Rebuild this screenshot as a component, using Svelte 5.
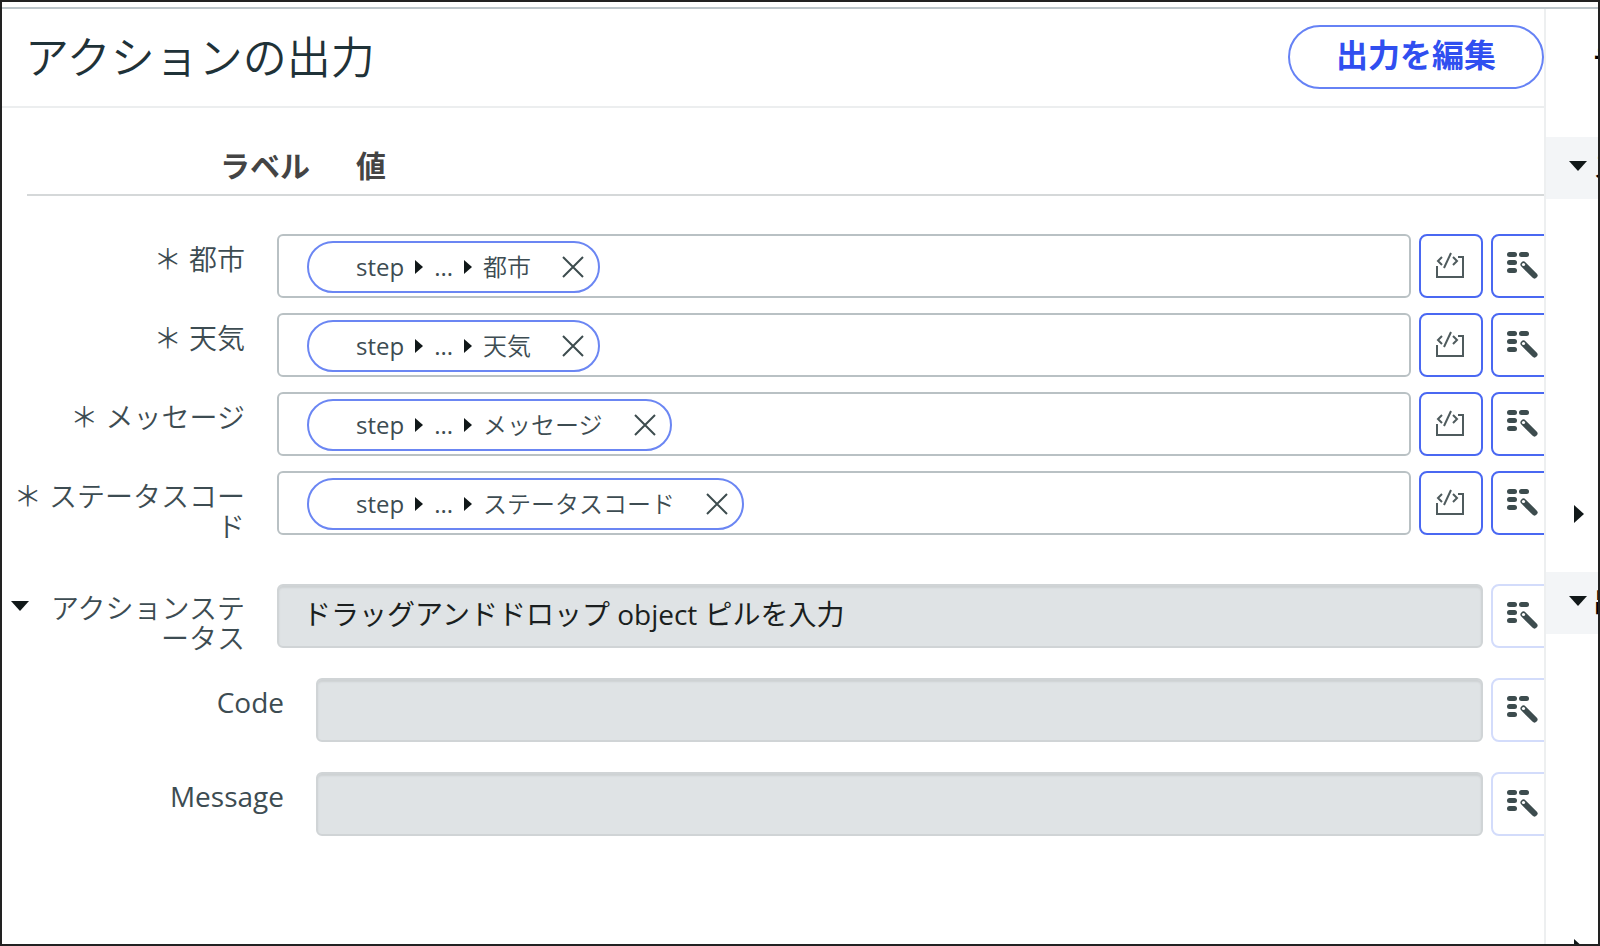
<script lang="ts">
  type Output = {
    id: string;
    label: string;
  };

  type StatusField = {
    id: string;
    label: string;
    placeholder: string;
    nested: boolean;
  };

  let outputs = $state<Output[]>([
    { id: 'city', label: '都市' },
    { id: 'weather', label: '天気' },
    { id: 'message', label: 'メッセージ' },
    { id: 'status-code', label: 'ステータスコード' }
  ]);

  // Outputs whose data pill was removed
  let cleared = $state<string[]>([]);

  let statusOpen = $state(true);

  const statusFields: StatusField[] = [
    {
      id: 'action-status',
      label: 'アクションステータス',
      placeholder: 'ドラッグアンドドロップ object ピルを入力',
      nested: false
    },
    { id: 'code', label: 'Code', placeholder: '', nested: true },
    { id: 'msg', label: 'Message', placeholder: '', nested: true }
  ];

  let visibleFields = $derived(statusFields.filter((f) => statusOpen || !f.nested));

  function removePill(id: string) {
    cleared = [...cleared, id];
  }
</script>

{#snippet caret(dir: string)}
  {#if dir === 'down'}
    <svg class="caret" width="18" height="10" viewBox="0 0 18 10" aria-hidden="true">
      <path d="M0 0h18L9 10z" />
    </svg>
  {:else}
    <svg class="caret" width="10" height="18" viewBox="0 0 10 18" aria-hidden="true">
      <path d="M0 0v18l10-9z" />
    </svg>
  {/if}
{/snippet}

{#snippet arrow()}
  <svg class="arrow" width="8" height="14" viewBox="0 0 8 14" aria-hidden="true">
    <path d="M0 0v14l8-7z" />
  </svg>
{/snippet}

{#snippet wandIcon()}
  <svg width="34" height="30" viewBox="0 0 34 30" aria-hidden="true">
    <g fill="#3d4c4e">
      <rect x="1" y="1" width="10" height="5" rx="2.5" />
      <rect x="13" y="1" width="10" height="5" rx="2.5" />
      <rect x="1" y="9" width="10" height="5" rx="2.5" />
      <rect x="1" y="17" width="10" height="5" rx="2.5" />
    </g>
    <path d="M17.500 13.500l11 11" stroke="#3d4c4e" stroke-width="6" stroke-linecap="round" />
    <circle cx="17.500" cy="13.500" r="1.600" fill="#fff" />
  </svg>
{/snippet}

{#snippet scriptIcon()}
  <svg width="30" height="28" viewBox="0 0 30 28" fill="none" stroke="#4f5b5d" stroke-width="2" aria-hidden="true">
    <path d="M1 14v11h26V5h-5" />
    <path d="M6 5L2 9l4 4M17 5l4 4-4 4M15 1L8 16" />
  </svg>
{/snippet}

<div class="frame">
  <div class="columns">
    <main>
      <header>
        <h1>アクションの出力</h1>
        <button class="edit" type="button">出力を編集</button>
      </header>

      <div class="heads">
        <span class="head-label">ラベル</span>
        <span>値</span>
      </div>

      <div class="rows">
        {#each outputs as output (output.id)}
          <div class="row">
            <span class="label" id="{output.id}-label">＊ {output.label}</span>
            <div class="field" role="group" aria-labelledby="{output.id}-label">
              {#if !cleared.includes(output.id)}
                <span class="pill">
                  <span>step</span>
                  {@render arrow()}
                  <span>...</span>
                  {@render arrow()}
                  <span class="name">{output.label}</span>
                  <button class="remove" type="button" aria-label="削除" onclick={() => removePill(output.id)}>
                    <svg width="22" height="22" viewBox="0 0 22 22" aria-hidden="true">
                      <path d="M1 1l20 20M21 1L1 21" stroke="#3d4c4e" stroke-width="2" />
                    </svg>
                  </button>
                </span>
              {/if}
            </div>
            <button class="tool" type="button" aria-label="スクリプト">{@render scriptIcon()}</button>
            <button class="tool" type="button" aria-label="データピルピッカー">{@render wandIcon()}</button>
          </div>
        {/each}
      </div>

      <div class="rows status">
        {#each visibleFields as field (field.id)}
          <div class="row">
            <div class="label" class:nested={field.nested}>
              {#if !field.nested}
                <button
                  class="toggle"
                  type="button"
                  aria-label="展開"
                  aria-expanded={statusOpen}
                  onclick={() => (statusOpen = !statusOpen)}
                >
                  {@render caret(statusOpen ? 'down' : 'right')}
                </button>
              {/if}
              <label for={field.id}>{field.label}</label>
            </div>
            <input id={field.id} type="text" placeholder={field.placeholder} disabled />
            <button class="tool faded" type="button" aria-label="データピルピッカー">{@render wandIcon()}</button>
          </div>
        {/each}
      </div>
    </main>

    <aside>
      <h2>データ</h2>
      <section>
        <h3>{@render caret('down')}<span>ステップ</span></h3>
        <div class="tree first">{@render caret('right')}</div>
      </section>
      <section>
        <h3>{@render caret('down')}<span>出力</span></h3>
        <div class="tree second">{@render caret('right')}</div>
      </section>
    </aside>
  </div>
</div>

<style>
  :global(body) {
    margin: 0;
  }

  .frame {
    box-sizing: border-box;
    height: 100vh;
    padding-top: 5px;
    border: 2px solid #222;
    overflow: hidden;
    display: flex;
    flex-direction: column;
    background: #fff;
    color: #3d4c52;
    font-family: 'Open Sans', 'Noto Sans CJK JP', sans-serif;
    font-size: 28px;
    line-height: 30px;
  }

  button,
  input {
    box-sizing: border-box;
    font: inherit;
    color: inherit;
  }

  button {
    padding: 0;
    background: #fff;
    cursor: pointer;
  }

  svg {
    display: block;
    flex: none;
  }

  .caret,
  .arrow {
    fill: #111819;
  }

  .columns {
    flex: 1;
    min-height: 0;
    display: flex;
    border-top: 2px solid #bcc5ca;
  }

  main {
    flex: 1;
    min-width: 0;
    overflow: hidden;
    border-right: 2px solid #edeff0;
  }

  header {
    display: flex;
    align-items: center;
    justify-content: space-between;
    height: 95px;
    padding: 0 0 2px 23px;
    border-bottom: 2px solid #eceeef;
  }

  h1 {
    margin: 0;
    font-size: 44px;
    font-weight: 350;
    line-height: 56px;
    color: #1f3238;
  }

  .edit {
    width: 256px;
    height: 64px;
    padding-bottom: 4px;
    border: 2px solid #6682f5;
    border-radius: 32px;
    color: #304ff0;
    font-size: 32px;
    font-weight: 700;
  }

  .heads {
    display: flex;
    gap: 46px;
    margin-left: 25px;
    padding: 43px 0 13px;
    border-bottom: 2px solid #d5d8d9;
    color: #444;
    font-size: 30px;
    font-weight: 700;
  }

  .head-label {
    width: 283px;
    text-align: right;
  }

  .rows {
    display: flex;
    flex-direction: column;
    gap: 15px;
    margin: 38px -11px 0 0;
  }

  .rows.status {
    gap: 30px;
    margin-top: 49px;
  }

  .row {
    display: flex;
    gap: 8px;
    height: 64px;
  }

  .label {
    box-sizing: border-box;
    flex: none;
    display: block;
    width: 243px;
    margin-right: 24px;
    padding: 10px 0 0 8px;
    font-weight: 350;
    text-align: right;
    word-break: break-all;
  }

  div.label {
    display: flex;
    justify-content: flex-end;
    gap: 16px;
    padding: 9px 0 0 9px;
  }

  .label.nested {
    width: 282px;
    font-weight: 400;
  }

  .toggle {
    flex: none;
    height: 26px;
    border: 0;
  }

  .field {
    box-sizing: border-box;
    flex: 1;
    min-width: 0;
    padding: 5px 28px;
    border: 2px solid #b9c1c4;
    border-radius: 6px;
  }

  .pill {
    box-sizing: border-box;
    display: inline-flex;
    align-items: center;
    gap: 11px;
    height: 52px;
    padding: 0 14px 0 47px;
    border: 2px solid #6b86f3;
    border-radius: 26px;
    font-size: 24px;
    white-space: nowrap;
  }

  .name {
    font-weight: 350;
  }

  .remove {
    margin-left: 20px;
    border: 0;
  }

  .tool {
    flex: none;
    display: flex;
    align-items: center;
    justify-content: center;
    width: 64px;
    border: 2px solid #4a68f2;
    border-radius: 8px;
  }

  .faded {
    border-color: #d3dcfb;
  }

  input {
    flex: 1;
    min-width: 0;
    padding: 0 24px 4px;
    border: 2px solid #d0d4d6;
    border-radius: 6px;
    background: #dfe3e5;
    box-shadow: inset 0 2px 2px #cdd1d3;
  }

  input::placeholder {
    color: #1b1f20;
    opacity: 1;
  }

  aside {
    flex: none;
    width: 52px;
    overflow: hidden;
    white-space: nowrap;
    color: #000;
  }

  h2,
  h3 {
    margin: 0;
    font-size: 28px;
    font-weight: 700;
  }

  h2 {
    height: 85px;
    padding: 35px 0 8px 47px;
  }

  h3 {
    display: flex;
    align-items: center;
    gap: 6px;
    height: 58px;
    padding: 0 0 4px 23px;
    background: #f3f5f7;
    font-weight: 400;
  }

  .tree {
    padding-left: 28px;
  }

  .first {
    padding-top: 306px;
    padding-bottom: 49px;
  }

  .second {
    padding-top: 305px;
  }
</style>
